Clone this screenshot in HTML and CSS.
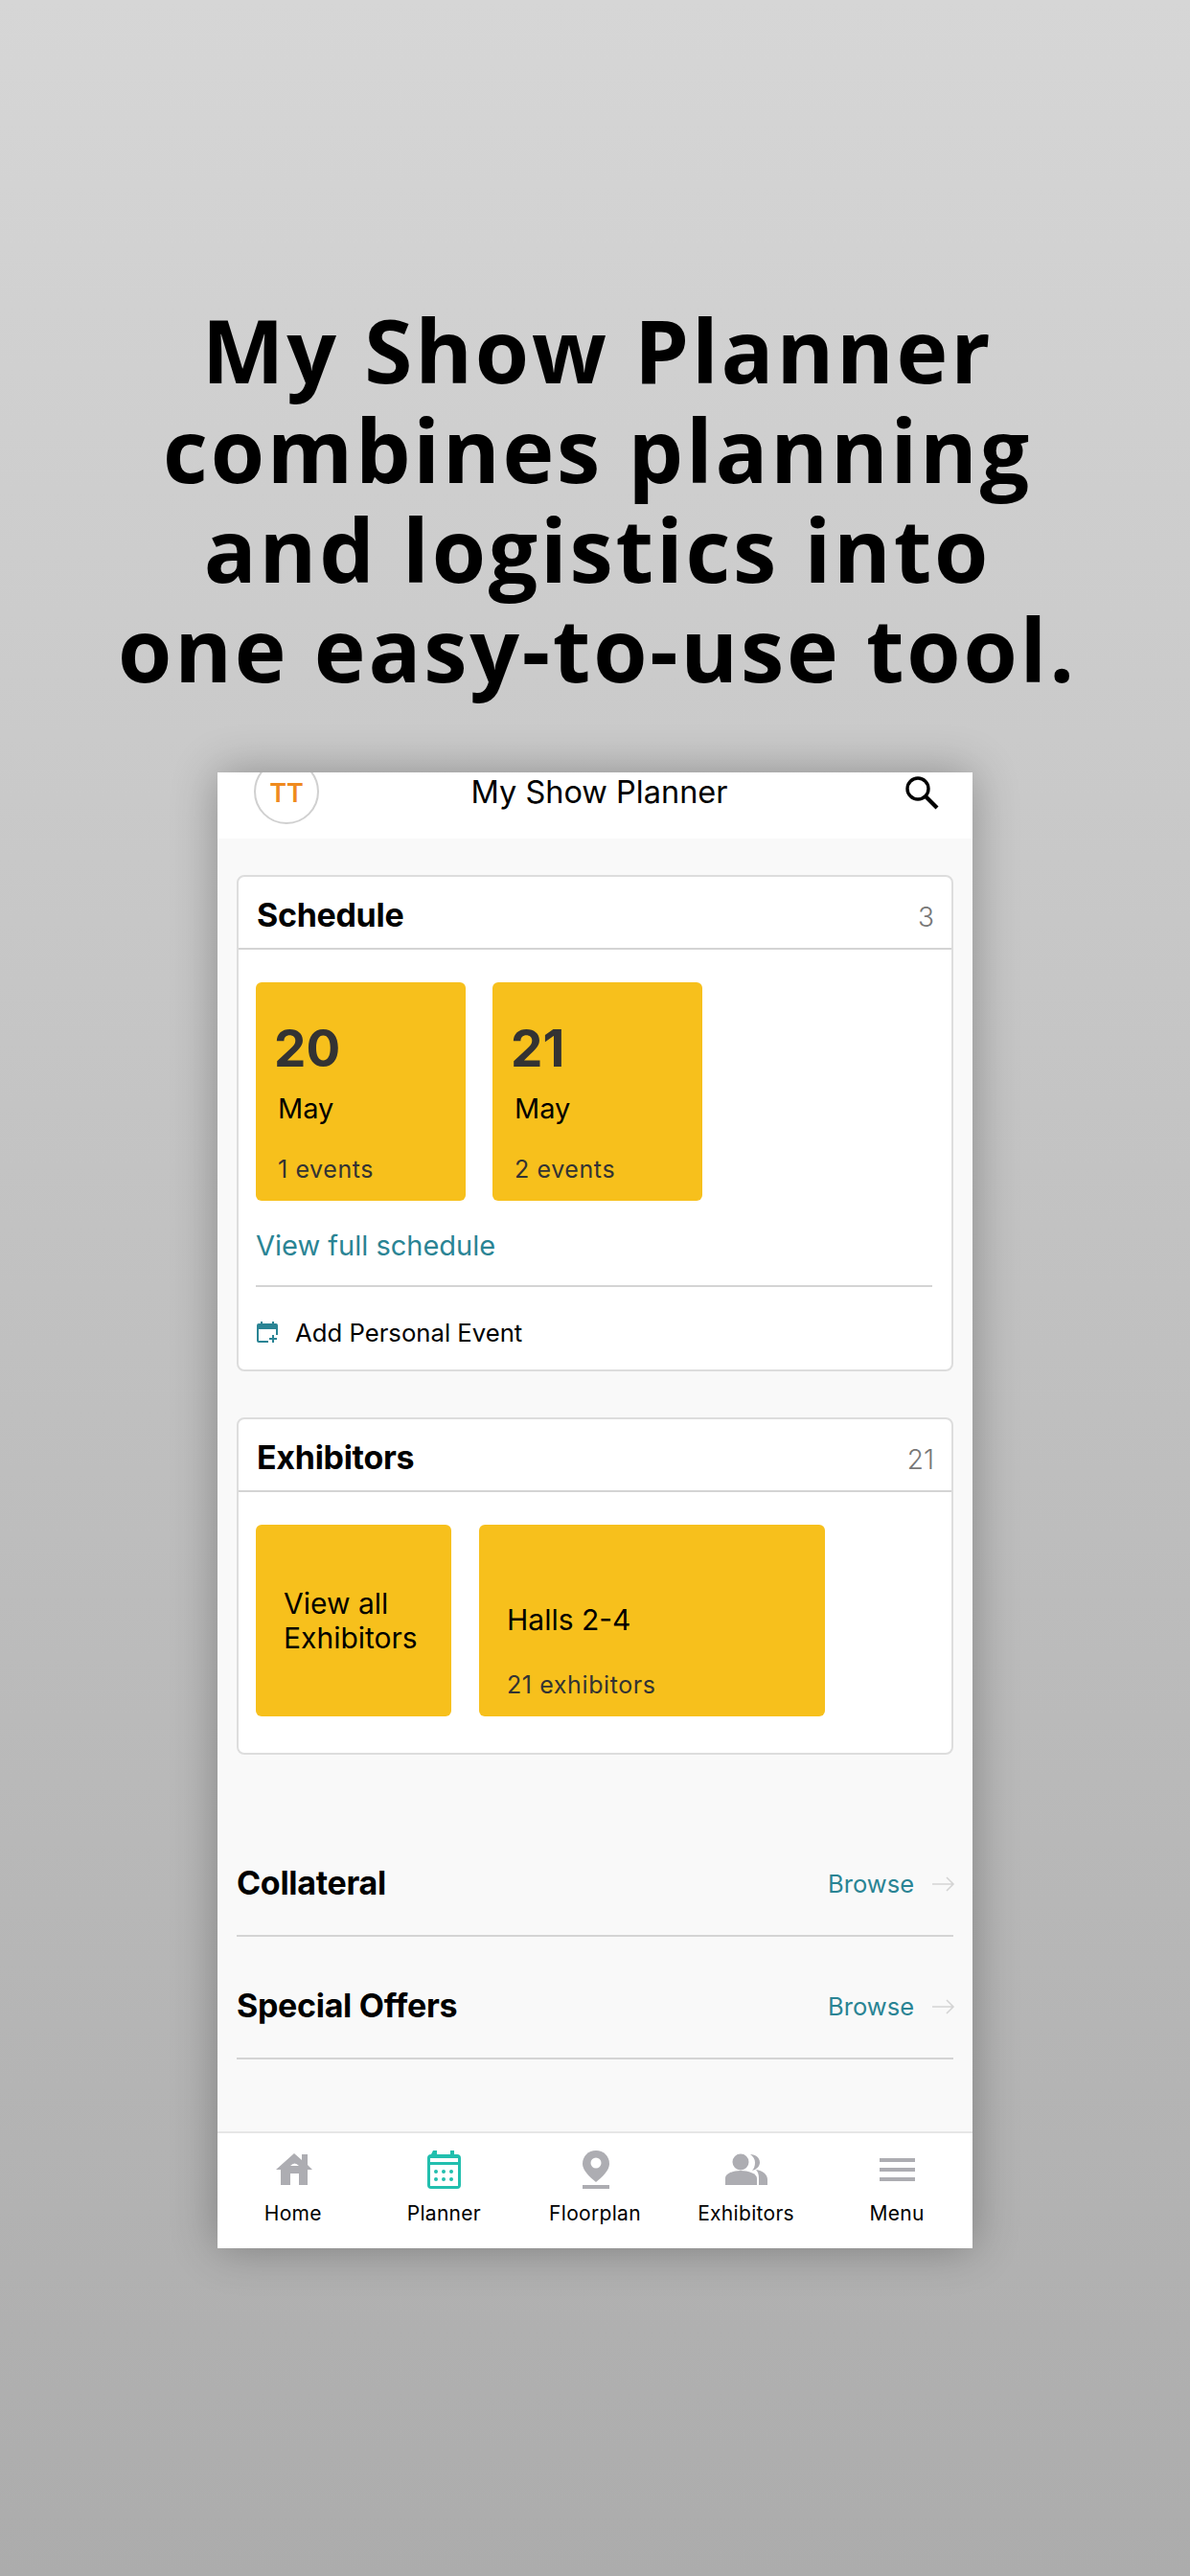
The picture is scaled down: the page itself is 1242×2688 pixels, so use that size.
FILE: index.html
```html
<!DOCTYPE html>
<html lang="en">
    <head>
        <meta charset="UTF-8">
        <title>My Show Planner</title>
        <link rel="stylesheet" href="styles.css">
    </head>
    <body>
        <h1 class="headline">My Show Planner<br>combines planning<br>and logistics into<br>one easy-to-use tool.</h1>

        <div class="phone">
            <div class="top_bar">
                <div class="avatar">TT</div>
                <div class="top_title">My Show Planner</div>
                <svg class="top_search" viewBox="0 0 36 36" width="36" height="36">
                    <circle cx="14" cy="14" r="11" fill="none" stroke="#000" stroke-width="3.4"/>
                    <path d="M22 22 L34 34" stroke="#000" stroke-width="4.2" fill="none"/>
                </svg>
            </div>

            <div class="content">
                <div class="panel">
                    <div class="panel_head">
                        <span class="panel_title">Schedule</span>
                        <span class="panel_count">3</span>
                    </div>
                    <div class="panel_body">
                        <div class="tiles">
                            <div class="tile date_tile">
                                <div class="day">20</div>
                                <div class="month">May</div>
                                <div class="tile_note">1 events</div>
                            </div>
                            <div class="tile date_tile">
                                <div class="day">21</div>
                                <div class="month">May</div>
                                <div class="tile_note">2 events</div>
                            </div>
                        </div>
                        <div class="full_link">View full schedule</div>
                        <div class="add_event">
                            <svg viewBox="0 0 22 22" width="22" height="22">
                                <path d="M4 0h2v2h10V0h2v2h2a2 2 0 0 1 2 2v10h-2V8H2v12h10v2H2a2 2 0 0 1-2-2V4a2 2 0 0 1 2-2h2z" fill="#2a8494"/>
                                <path d="M16 14h2v3h3v2h-3v3h-2v-3h-3v-2h3z" fill="#2a8494"/>
                            </svg>
                            <span>Add Personal Event</span>
                        </div>
                    </div>
                </div>

                <div class="panel panel_second">
                    <div class="panel_head">
                        <span class="panel_title">Exhibitors</span>
                        <span class="panel_count">21</span>
                    </div>
                    <div class="panel_body">
                        <div class="tiles tiles_ex">
                            <div class="tile all_tile">View all<br>Exhibitors</div>
                            <div class="tile hall_tile">
                                <div class="hall_name">Halls 2-4</div>
                                <div class="tile_note">21 exhibitors</div>
                            </div>
                        </div>
                    </div>
                </div>

                <div class="browse_rows">
                    <div class="browse_row">
                        <span class="panel_title">Collateral</span>
                        <span class="browse_link">Browse
                            <svg viewBox="0 0 24 16" width="24" height="16"><path d="M0 8h22M15 1l7 7-7 7" fill="none" stroke="#d4d4d4" stroke-width="1.6"/></svg>
                        </span>
                    </div>
                    <div class="browse_row">
                        <span class="panel_title">Special Offers</span>
                        <span class="browse_link">Browse
                            <svg viewBox="0 0 24 16" width="24" height="16"><path d="M0 8h22M15 1l7 7-7 7" fill="none" stroke="#d4d4d4" stroke-width="1.6"/></svg>
                        </span>
                    </div>
                </div>
            </div>

            <div class="tab_bar">
                <div class="tab">
                    <svg viewBox="0 0 44 42" width="44" height="42">
                        <path d="M4 20 L23 3 L31 10 V4 H37 V15 L42 20 H37 V36 H28 V24 H19 V36 H9 V20 Z" fill="#adadb2"/>
                        <path d="M19 16 Q23.500 11 28 16 Z" fill="#fff"/>
                    </svg>
                    <span>Home</span>
                </div>
                <div class="tab">
                    <svg viewBox="0 0 44 42" width="44" height="42">
                        <path d="M11 0h4v4h14V0h4v4h3a4 4 0 0 1 4 4v28a4 4 0 0 1-4 4H9a4 4 0 0 1-4-4V8a4 4 0 0 1 4-4z" fill="#22bfae"/>
                        <rect x="8" y="8" width="29" height="4" fill="#fff"/>
                        <rect x="8" y="15" width="29" height="22" fill="#fff"/>
                        <g fill="#22bfae">
                            <circle cx="14" cy="22" r="2"/><circle cx="22" cy="22" r="2"/><circle cx="30" cy="22" r="2"/>
                            <circle cx="14" cy="30" r="2"/><circle cx="22" cy="30" r="2"/><circle cx="30" cy="30" r="2"/>
                        </g>
                    </svg>
                    <span>Planner</span>
                </div>
                <div class="tab">
                    <svg viewBox="0 0 44 42" width="44" height="42">
                        <path d="M23 0C15 0 9 6 9 14c0 7 8 14 14 19 6-5 14-12 14-19C37 6 31 0 23 0z" fill="#adadb2"/>
                        <circle cx="23" cy="13" r="5.500" fill="#fff"/>
                        <rect x="9" y="36" width="28" height="4" fill="#adadb2"/>
                    </svg>
                    <span>Floorplan</span>
                </div>
                <div class="tab">
                    <svg viewBox="0 0 46 42" width="46" height="42">
                        <circle cx="17" cy="12" r="8.500" fill="#adadb2"/>
                        <path d="M1 36V29c0-5 8-8 16-8s17 3 17 8v7z" fill="#adadb2"/>
                        <path d="M27 4c6 0 10 4 10 8.500S33 20 29 21c2-2 3-5 3-8.500S30 6 27 4z" fill="#adadb2"/>
                        <path d="M33 20c7 1 12 5 12 10v6h-9v-7c0-4-1-7-3-9z" fill="#adadb2"/>
                    </svg>
                    <span>Exhibitors</span>
                </div>
                <div class="tab">
                    <svg viewBox="0 0 44 42" width="44" height="42">
                        <rect x="4" y="8" width="37" height="4" fill="#adadb2"/>
                        <rect x="4" y="18" width="37" height="4" fill="#adadb2"/>
                        <rect x="4" y="28" width="37" height="4" fill="#adadb2"/>
                    </svg>
                    <span>Menu</span>
                </div>
            </div>
        </div>
    </body>
</html>
```

FILE: styles.css
```css
* {
    margin: 0px;
    padding: 0px;
    box-sizing: border-box;
}

body {
    width: 1242px;
    height: 2688px;
    overflow: hidden;
    background: linear-gradient(#d6d6d6, #acacac);
    font-family: "Inter", "Liberation Sans", sans-serif;
    color: #000;
}

.headline {
    padding-top: 313px;
    padding-left: 5px;
    height: 806px;
    text-align: center;
    font-family: "Open Sans", "DejaVu Sans", sans-serif;
    font-size: 91px;
    line-height: 104px;
    font-weight: 700;
    letter-spacing: 2.8px;
}

.phone {
    width: 788px;
    height: 1540px;
    margin-left: 227px;
    display: flex;
    flex-direction: column;
    overflow: hidden;
    background-color: #f9f9f9;
    box-shadow: 0 0 44px rgba(0, 0, 0, 0.3);
}

.top_bar {
    height: 69px;
    flex: none;
    background-color: white;
    display: flex;
    align-items: flex-start;
    padding-left: 38px;
    padding-right: 35px;
}

.avatar {
    width: 68px;
    height: 68px;
    margin-top: -14px;
    border: 2px solid #d0d0d0;
    border-radius: 50%;
    display: flex;
    align-items: center;
    justify-content: center;
    color: #ef8a1e;
    font-size: 27px;
    font-weight: 600;
    padding-top: 2px;
}

.top_title {
    flex: 1;
    text-align: center;
    padding-right: 26px;
    font-size: 32.5px;
    line-height: 42px;
}

.top_search {
    margin-top: 3px;
}

.content {
    flex: 1;
    padding: 38px 20px 0 20px;
}

.panel {
    width: 748px;
    background-color: white;
    border: 2px solid #dddddd;
    border-radius: 8px;
}

.panel_second {
    margin-top: 48px;
}

.panel_head {
    height: 76px;
    display: flex;
    justify-content: space-between;
    align-items: center;
    padding: 4px 18px 0 19px;
    border-bottom: 2px solid #d4d4d4;
}

.panel_title {
    font-size: 34px;
    font-weight: 700;
    letter-spacing: -0.3px;
}

.panel_count {
    font-size: 28px;
    font-weight: 300;
    color: #777;
    padding-top: 6px;
}

.panel_body {
    padding: 34px 20px 0 18px;
}

.tiles {
    display: flex;
    gap: 28px;
}

.tiles_ex {
    gap: 29px;
    padding-bottom: 38px;
}

.tile {
    background-color: #f7c01c;
    border-radius: 6px;
}

.date_tile {
    width: 219px;
    height: 228px;
    padding: 37px 0 0 19px;
}

.day {
    font-size: 53px;
    line-height: 64px;
    font-weight: 700;
    color: #333;
}

.month {
    font-size: 29px;
    line-height: 36px;
    margin-top: 13px;
    padding-left: 4px;
}

.tile_note {
    font-size: 25px;
    line-height: 30px;
    letter-spacing: 0.6px;
    color: #333;
    margin-top: 30px;
    padding-left: 4px;
}

.full_link {
    font-size: 29px;
    line-height: 36px;
    color: #2a8494;
    margin-top: 29px;
    padding-bottom: 23px;
    border-bottom: 2px solid #d4d4d4;
}

.add_event {
    display: flex;
    align-items: center;
    gap: 18px;
    height: 86px;
    font-size: 25.7px;
    padding-top: 8px;
    padding-left: 1px;
}

.all_tile {
    width: 204px;
    height: 200px;
    padding: 0 0 0 29px;
    display: flex;
    align-items: center;
    font-size: 30px;
    line-height: 36px;
}

.hall_tile {
    width: 361px;
    height: 200px;
    padding: 81px 0 0 29px;
}

.hall_name {
    font-size: 30px;
    line-height: 36px;
}

.hall_tile .tile_note {
    margin-top: 35px;
    padding-left: 0;
}

.browse_rows {
    margin-top: 62px;
}

.browse_row {
    width: 748px;
    height: 128px;
    padding-top: 51px;
    display: flex;
    justify-content: space-between;
    align-items: flex-start;
    border-bottom: 2px solid #d4d4d4;
}

.browse_link {
    display: flex;
    align-items: center;
    gap: 19px;
    font-size: 25.5px;
    color: #2a8494;
    margin-right: -2px;
    padding-top: 6px;
}

.tab_bar {
    height: 122px;
    flex: none;
    background-color: white;
    border-top: 2px solid #e6e6e6;
    display: flex;
    padding-top: 18px;
}

.tab {
    width: 157.6px;
    display: flex;
    flex-direction: column;
    align-items: center;
    font-size: 21px;
    letter-spacing: 0.3px;
}

.tab span {
    margin-top: 11px;
}
```
